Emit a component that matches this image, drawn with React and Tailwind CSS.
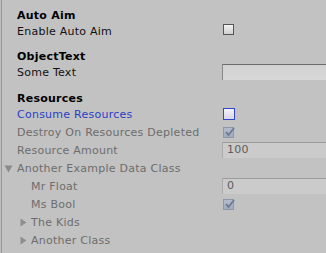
import React from "react";

const font = { fontFamily: '"DejaVu Sans", Verdana, sans-serif' };

function Box({ variant = "normal", checked = false }) {
  if (variant === "disabled") {
    return (
      <div className="relative mt-[2px] ml-[223px] h-[11px] w-[11px] border border-[#8e97a9] bg-gradient-to-b from-[#b4bccc] to-[#a2abbe]">
        {checked && (
          <svg className="absolute left-[0px] top-[-1px]" width="11" height="11" viewBox="0 0 11 11">
            <path d="M2 5 L4.5 8 L10 1" stroke="#6c7a98" strokeWidth="1.8" fill="none" />
          </svg>
        )}
      </div>
    );
  }
  if (variant === "focus") {
    return (
      <div className="mt-[1px] ml-[223px] h-[12px] w-[12px] border-[1.5px] border-[#3346cc] bg-gradient-to-b from-[#f2f2f8] to-[#d6d8e6]" />
    );
  }
  return (
    <div className="mt-[0px] ml-[223px] h-[11px] w-[11px] border border-[#555555] bg-gradient-to-b from-[#f4f4f4] to-[#cfcfcf]" />
  );
}

function Field({ value = "", disabled = false }) {
  return (
    <div
      className={
        "-mt-[1px] ml-[222px] flex-1 h-[16px] border-t border-l flex items-center pl-[4px] text-[11px] tracking-[0.25px] " +
        (disabled
          ? "border-t-[#9c9c9c] border-l-[#acacac] bg-[#cbcbcb] text-[#5c5c5c]"
          : "border-t-[#6a6a6a] border-l-[#888888] bg-gradient-to-b from-[#d2d2d2] to-[#d8d8d8] text-[#111]")
      }
    >
      {value}
    </div>
  );
}

function Row({ label, indent = 17, color = "#111", bold = false, className = "", children, arrow }) {
  return (
    <div className={"relative flex h-[16px] items-start " + className}>
      {arrow === "down" && (
        <svg className="absolute left-[4px] top-[4px]" width="9" height="8" viewBox="0 0 9 8">
          <path d="M0.5 0.5 L8.5 0.5 L4.5 7.5 Z" fill="#8a8a8a" />
        </svg>
      )}
      {arrow === "right" && (
        <svg className="absolute left-[20px] top-[3px]" width="7" height="9" viewBox="0 0 7 9">
          <path d="M0.5 0.5 L6.5 4.5 L0.5 8.5 Z" fill="#8e8e8e" />
        </svg>
      )}
      <span
        className={"absolute top-0 leading-[16px] text-[11px] tracking-[0.25px] whitespace-nowrap " + (bold ? "font-bold" : "")}
        style={{ left: indent, color }}
      >
        {label}
      </span>
      {children}
    </div>
  );
}

export default function App() {
  const gray = "#6d6d6d";
  return (
    <div className="flex h-[253px] w-[326px] overflow-hidden bg-[#c2c2c2]" style={font}>
      <div className="w-[1px] bg-[#bdbdbd]" />
      <div className="w-[1px] bg-[#9a9a9a]" />
      <div className="flex flex-1 flex-col pt-[8px] -ml-[2px]">
        <Row label="Auto Aim" bold color="#000" />
        <Row label="Enable Auto Aim" color="#111">
          <Box />
        </Row>
        <Row label="ObjectText" bold color="#000" className="mt-[9px]" />
        <Row label="Some Text" color="#111">
          <Field />
        </Row>
        <Row label="Resources" bold color="#000" className="mt-[10px]" />
        <Row label="Consume Resources" color="#2a3fc6">
          <Box variant="focus" />
        </Row>
        <Row label="Destroy On Resources Depleted" color={gray} className="mt-[2px]">
          <Box variant="disabled" checked />
        </Row>
        <Row label="Resource Amount" color={gray} className="mt-[2px]">
          <Field value="100" disabled />
        </Row>
        <Row label="Another Example Data Class" color={gray} className="mt-[2px]" arrow="down" />
        <Row label="Mr Float" indent={31} color={gray} className="mt-[2px]">
          <Field value="0" disabled />
        </Row>
        <Row label="Ms Bool" indent={31} color={gray} className="mt-[2px]">
          <Box variant="disabled" checked />
        </Row>
        <Row label="The Kids" indent={31} color={gray} className="mt-[2px]" arrow="right" />
        <Row label="Another Class" indent={31} color={gray} className="mt-[2px]" arrow="right" />
      </div>
    </div>
  );
}
